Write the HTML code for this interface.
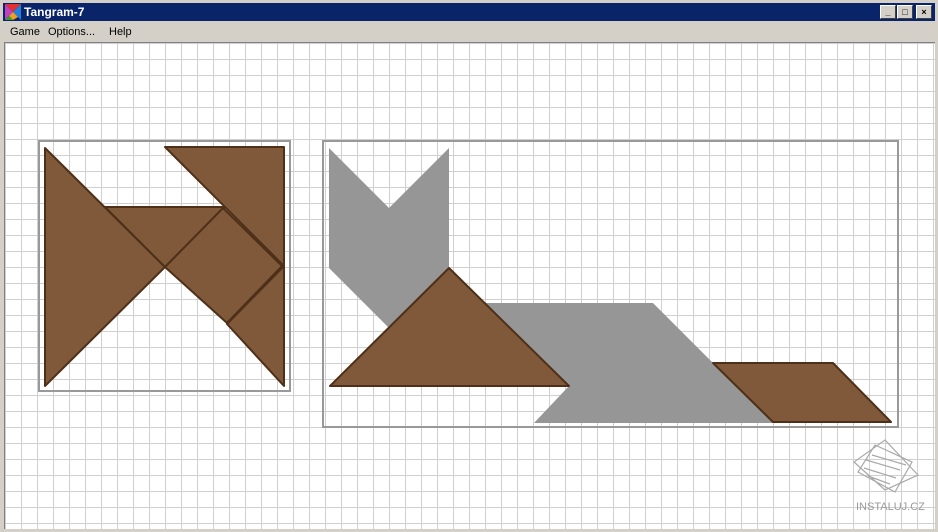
<!DOCTYPE html>
<html><head><style>
body{margin:0;width:938px;height:532px;overflow:hidden;background:#d4d0c8;font-family:Tahoma,"Liberation Sans",sans-serif;position:relative}
.title{position:absolute;left:3px;top:3px;width:932px;height:18px;background:#0a246a;color:#fff;font-weight:bold;font-size:12px;line-height:18px}
.title span{position:absolute;left:21px;top:0}
.btn{position:absolute;top:2px;width:14px;height:12px;background:#d4d0c8;border:1px solid;border-color:#fff #404040 #404040 #fff;font-size:9px;color:#000;text-align:center;line-height:12px}
.menu{position:absolute;top:23px;left:3px;height:19px;font-size:11px;line-height:19px;color:#000}
.menu span{position:absolute;white-space:nowrap}
.client{position:absolute;left:4px;top:42px;width:930px;height:486px;background-color:#fff;
background-image:linear-gradient(to right,#d0d0d0 1px,transparent 1px),linear-gradient(to bottom,#d0d0d0 1px,transparent 1px);
background-size:16px 16px;background-position:16px 16px;border-top:1px solid #808080;border-left:1px solid #808080}
svg{position:absolute;left:0;top:0}
</style></head><body>
<div class="title"><svg width="16" height="16" style="left:2px;top:1px"><polygon points="0,0 16,0 8,8" fill="#e03030"/><polygon points="0,0 8,8 0,16" fill="#c040c0"/><polygon points="16,0 16,16 8,8" fill="#2080e0"/><polygon points="8,8 13,13 8,16 4,12" fill="#f0a020"/><polygon points="0,16 8,16 4,12" fill="#30a030"/></svg><span>Tangram-7</span>
<div class="btn" style="left:877px">_</div><div class="btn" style="left:894px">□</div><div class="btn" style="left:913px">×</div></div>
<div class="menu"><span style="left:7px">Game</span><span style="left:45px">Options...</span><span style="left:106px">Help</span></div>
<div class="client"></div>
<svg width="938" height="532">
<g fill="none" stroke="#999" stroke-width="2">
<rect x="39" y="141" width="251" height="250"/>
<rect x="323" y="141" width="575" height="286"/>
</g>
<polygon points="329,148 389,208 449,148 449,268 484,303 653,303 773,423 534,423 569,386 389,386 389,328 329,268" fill="#969696"/>
<g fill="#80583a" stroke="#4e3018" stroke-width="2" stroke-linejoin="round">
<polygon points="45,148 45,386 165,267"/>
<polygon points="165,147 284,147 284,266"/>
<polygon points="105,207 225,207 165,267"/>
<polygon points="223,208 282,266 227,323 165,267"/>
<polygon points="284,266 284,386 227,324"/>
<polygon points="449,268 330,386 569,386"/>
<polygon points="713,363 833,363 891,422 773,422"/>
</g>
<g fill="none" stroke="#a9a9a9" stroke-width="1.2">
<polygon points="885,440 918,475 885,490 854,462"/>
<polygon points="875,445 912,462 895,492 858,472"/>
<path d="M866,460 L900,470 M864,468 L896,478 M872,455 L906,465 M868,476 L890,484"/>
</g>
<text x="856" y="510" font-family="Liberation Sans,sans-serif" font-size="11" fill="#9a9a9a">INSTALUJ.CZ</text>
</svg>
</body></html>
